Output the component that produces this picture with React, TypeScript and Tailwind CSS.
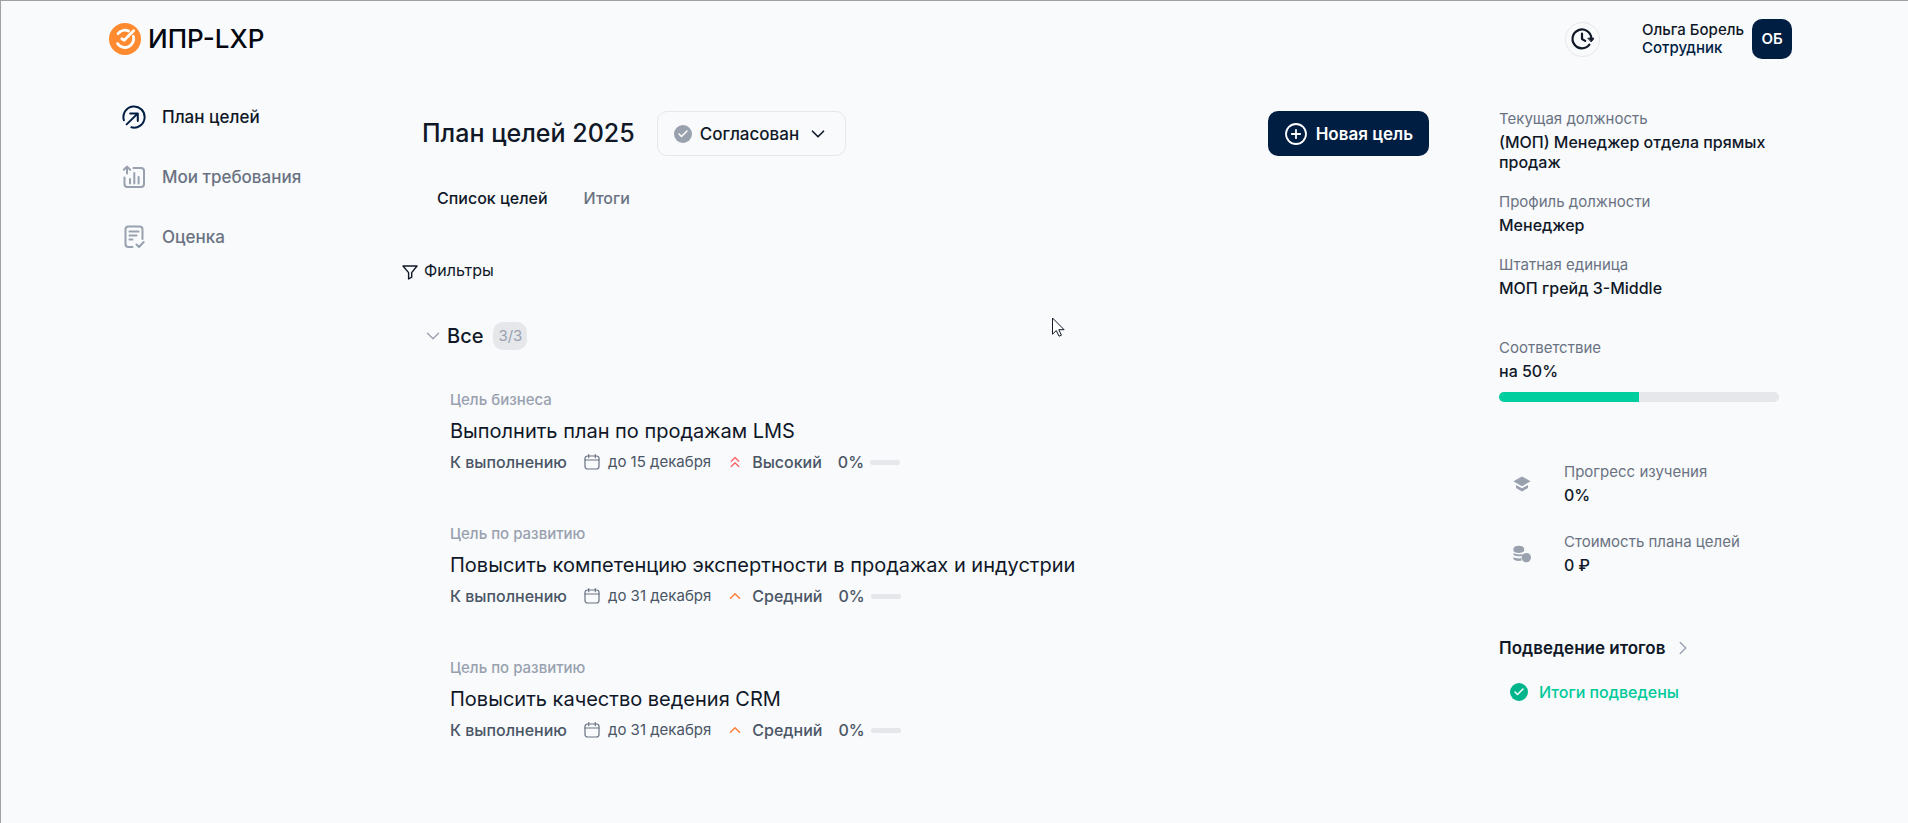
import { useState, type ReactNode } from "react";
import { Check, ChevronDown, ChevronRight, ChevronUp, ChevronsUp } from "lucide-react";
import clsx from "clsx";

type Goal = { id: number; kind: string; title: string; due: string; priority: "high" | "medium"; progress: number };

const GOALS: Goal[] = [
  { id: 1, kind: "Цель бизнеса", title: "Выполнить план по продажам LMS", due: "до 15 декабря", priority: "high", progress: 0 },
  { id: 2, kind: "Цель по развитию", title: "Повысить компетенцию экспертности в продажах и индустрии", due: "до 31 декабря", priority: "medium", progress: 0 },
  { id: 3, kind: "Цель по развитию", title: "Повысить качество ведения CRM", due: "до 31 декабря", priority: "medium", progress: 0 },
];

const stroke = { fill: "none", stroke: "currentColor", strokeLinecap: "round", strokeLinejoin: "round" } as const;

function Logo() {
  return (
    <svg viewBox="0 0 32 32" className="size-8">
      <circle cx="16" cy="16" r="16" fill="#ff8a30" />
      <path d="M9 10.600A9 9 0 0 1 19.600 8M24.400 13.400A8.800 8.800 0 0 1 8.600 20.600" {...stroke} stroke="#fff" strokeWidth="2.800" />
      <path d="M12.800 15.800l2.400 1.400L24.600 7.800" {...stroke} stroke="#fff" strokeWidth="2.800" />
    </svg>
  );
}

function GoalsIcon() {
  return (
    <svg viewBox="0 0 24 24" className="size-6" {...stroke} strokeWidth="2">
      <path d="M1.900 15.200A10.600 10.600 0 1 1 9.400 22.300" />
      <path d="M4.600 19.400L15.600 8.600M8.200 8.400h7.600v7.600" />
    </svg>
  );
}

function RequirementsIcon() {
  return (
    <svg viewBox="0 0 24 24" className="size-6" {...stroke} strokeWidth="2">
      <path d="M11.500 3H19a3 3 0 0 1 3 3v13a3 3 0 0 1-3 3H5.500a3 3 0 0 1-3-3v-6.500" />
      <path d="M5 8.500V2M1.800 4.800L5 1.600l3.200 3.200" />
      <path d="M8 18.500v-4.500M12.300 18.500V8M16.600 18.500v-6.500" />
    </svg>
  );
}

function ReviewIcon() {
  return (
    <svg viewBox="0 0 24 24" className="size-6" {...stroke} strokeWidth="2">
      <path d="M10.500 22H6.500a3 3 0 0 1-3-3V4.500a3 3 0 0 1 3-3h11a3 3 0 0 1 3 3V14" />
      <path d="M7.500 6.500h9M7.500 10.500h7M7.500 14.500h3M14.500 19.500l2.500 2.500 4.700-5" />
    </svg>
  );
}

function HistoryIcon() {
  return (
    <svg viewBox="0 0 24 24" className="size-6" {...stroke} strokeWidth="2.200">
      <path d="M19.400 17.600A9.400 9.400 0 1 1 21.300 11" />
      <path d="M12 6.500V12l3.200 1.900" />
      <path d="M18.200 11.200h6l-2.800 3.400z" fill="currentColor" strokeWidth="1" />
    </svg>
  );
}

function CalendarIcon() {
  return (
    <svg viewBox="0 0 16 16" className="size-4" {...stroke} strokeWidth="1.200">
      <rect x="1" y="2" width="14" height="13" rx="2.500" />
      <path d="M1 6h14M4.700.600v3M11.300.600v3" />
    </svg>
  );
}

function FilterIcon() {
  return (
    <svg viewBox="0 0 16 16" className="mt-1 size-4" {...stroke} strokeWidth="1.400">
      <path d="M1 2h14L9.700 8.600v4.600L6.600 15V8.600z" />
    </svg>
  );
}

function LayersIcon() {
  return (
    <svg viewBox="0 0 18 18" className="size-[18px]" fill="currentColor">
      <path d="M9 1.500l8.600 4.800L9 11.200.400 6.300z" />
      <path d="M3 10l6 3.300L15 10v3L9 16.500 3 13z" />
    </svg>
  );
}

function CoinsIcon() {
  return (
    <svg viewBox="0 0 18 18" className="size-[18px]" fill="currentColor">
      <ellipse cx="5.800" cy="3.800" rx="5.300" ry="3.100" />
      <path d="M.500 4v1.800c0 1.200 2.400 2.200 5.300 2.200s5.300-1 5.300-2.200V4z" />
      <path d="M.500 8c2 1.500 7 2 9.400.800L8.600 11c-3.500.600-8.100-.2-8.100-1.800zM.500 12c1.600 1.300 4.900 1.700 7.600 1.300l.700 2.200c-3.600.9-8.300.2-8.300-1.700z" />
      <circle cx="13.300" cy="12.600" r="4.700" />
    </svg>
  );
}

function CheckBadge({ className }: { className: string }) {
  return (
    <span className={clsx("flex size-[18px] items-center justify-center rounded-full text-white", className)}>
      <Check size={12} strokeWidth={3} />
    </span>
  );
}

const NAV = [
  { label: "План целей", icon: <GoalsIcon />, active: true },
  { label: "Мои требования", icon: <RequirementsIcon />, active: false },
  { label: "Оценка", icon: <ReviewIcon />, active: false },
];

function Header() {
  return (
    <header className="flex h-[76px] items-center justify-between">
      <a href="#" className="flex items-center gap-[7px] text-[26px] leading-9 font-medium text-gray-950">
        <Logo />
        ИПР-LXP
      </a>
      <div className="flex items-center gap-[42px]">
        <button type="button" aria-label="История" className="flex size-[35px] items-center justify-center rounded-full border border-gray-200 text-gray-900">
          <HistoryIcon />
        </button>
        <button type="button" className="flex items-center gap-2 text-left text-[15px] leading-[18px] font-medium">
          <span>
            <span className="block text-gray-900">Ольга Борель</span>
            <span className="block text-[#001d42]">Сотрудник</span>
          </span>
          <span className="flex size-10 items-center justify-center rounded-[10px] bg-[#001d42] font-semibold text-white">ОБ</span>
        </button>
      </div>
    </header>
  );
}

function GoalCard({ goal }: { goal: Goal }) {
  const high = goal.priority === "high";
  return (
    <article className="pl-7">
      <p className="text-[15px] leading-5 font-medium text-gray-400">{goal.kind}</p>
      <h3 className="mt-[7px] text-xl leading-7 text-gray-900">{goal.title}</h3>
      <div className="mt-[5px] flex h-6 items-center text-base font-medium text-gray-600">
        <span>К выполнению</span>
        <span className="ml-[17px] flex items-center gap-2 text-[15px] font-normal">
          <span className="text-gray-500"><CalendarIcon /></span>
          {goal.due}
        </span>
        <span className="ml-[15px] flex items-center gap-2">
          {high
            ? <ChevronsUp size={18} strokeWidth={1.800} className="text-red-400" />
            : <ChevronUp size={18} strokeWidth={2} className="text-[#fb7f3b]" />}
          {high ? "Высокий" : "Средний"}
        </span>
        <span className="ml-4">{goal.progress}%</span>
        <span className="ml-1.5 h-[5px] w-[30px] overflow-hidden rounded-full bg-gray-200">
          <span className="block h-full bg-[#00ce9f]" style={{ width: `${goal.progress}%` }} />
        </span>
      </div>
    </article>
  );
}

function Field({ label, children }: { label: string; children: ReactNode }) {
  return (
    <div>
      <dt className="text-[15px] leading-5 text-gray-500">{label}</dt>
      <dd className="mt-[3px] text-base leading-5 font-medium text-gray-900">{children}</dd>
    </div>
  );
}

function Summary() {
  return (
    <aside className="w-[280px] shrink-0 pt-3">
      <dl className="space-y-5">
        <Field label="Текущая должность">(МОП) Менеджер отдела прямых продаж</Field>
        <Field label="Профиль должности">Менеджер</Field>
        <Field label="Штатная единица">МОП грейд 3-Middle</Field>
      </dl>
      <dl className="mt-10">
        <Field label="Соответствие">на 50%</Field>
      </dl>
      <div role="progressbar" aria-label="Соответствие" aria-valuenow={50} className="mt-[11px] h-2.5 overflow-hidden rounded-full bg-gray-200">
        <div className="h-full w-1/2 bg-[#00ce9f]" />
      </div>
      <dl className="mt-[60px] space-y-[27px] pl-3.5">
        <div className="flex items-center gap-[33px] text-gray-400">
          <LayersIcon />
          <Field label="Прогресс изучения">0%</Field>
        </div>
        <div className="flex items-center gap-[33px] text-gray-400">
          <CoinsIcon />
          <Field label="Стоимость плана целей">0 ₽</Field>
        </div>
      </dl>
      <a href="#" className="mt-[61px] flex items-center gap-[7px] text-[17px] leading-6 font-semibold text-gray-900">
        Подведение итогов
        <ChevronRight size={22} strokeWidth={1.500} className="text-gray-400" />
      </a>
      <p className="mt-5 flex items-center gap-[11px] pl-[11px] leading-6 font-medium text-[#00c99a]">
        <CheckBadge className="bg-[#00b58b]" />
        Итоги подведены
      </p>
    </aside>
  );
}

export default function App() {
  const [tab, setTab] = useState("Список целей");
  const [open, setOpen] = useState(true);

  return (
    <div className="relative min-h-screen border-t border-l border-[#a0a1a4] bg-[#f8fafc] pr-[116px] pl-[108px] font-['Inter',sans-serif]">
      <Header />
      <div className="flex pt-5">
        <nav className="w-[313px] shrink-0 space-y-5 pl-[13px]">
          {NAV.map((item) => (
            <a key={item.label} href="#" className={clsx("flex h-10 items-center gap-4 text-[17px] leading-7 font-medium", item.active ? "text-[#001d42]" : "text-gray-400")}>
              {item.icon}
              <span className={item.active ? "text-gray-900" : "text-gray-500"}>{item.label}</span>
            </a>
          ))}
        </nav>

        <main className="min-w-0 flex-1 pt-3.5">
          <div className="flex items-center">
            <h1 className="text-[25px] leading-[39px] font-medium text-gray-900">План целей 2025</h1>
            <button type="button" className="ml-[22px] flex h-[45px] items-center gap-2 rounded-[10px] border border-gray-200 px-4 text-[17px] leading-7 font-medium text-gray-900">
              <CheckBadge className="bg-gray-400" />
              Согласован
              <ChevronDown size={22} strokeWidth={1.800} />
            </button>
            <button type="button" className="ml-auto flex h-[45px] items-center gap-2 rounded-[10px] bg-[#001d42] px-4 text-[17px] leading-7 font-semibold text-white">
              <svg viewBox="0 0 24 24" className="size-6" {...stroke} strokeWidth="1.800">
                <circle cx="12" cy="12" r="10" />
                <path d="M12 7.800v8.400M7.800 12h8.400" />
              </svg>
              Новая цель
            </button>
          </div>

          <div role="tablist" className="mt-[30px] flex gap-9 pl-[15px]">
            {["Список целей", "Итоги"].map((name) => (
              <button
                key={name}
                type="button"
                role="tab"
                aria-selected={tab === name}
                onClick={() => setTab(name)}
                className={clsx("text-base leading-6 font-medium", tab === name ? "text-gray-900" : "text-gray-500")}
              >
                {name}
              </button>
            ))}
          </div>

          <button type="button" className="mt-12 -ml-5 flex items-center gap-1.5 text-base leading-6 text-gray-900">
            <FilterIcon />
            Фильтры
          </button>

          <section className="mt-10">
            <button type="button" onClick={() => setOpen(!open)} className="flex h-7 items-center text-xl text-gray-900">
              <ChevronDown size={22} strokeWidth={1.500} className="text-gray-400" />
              <span className="ml-[3px] font-medium">Все</span>
              <span className="ml-2.5 rounded-[10px] bg-gray-200 px-[5px] text-[15px] leading-7 text-gray-400">3/3</span>
            </button>
            {open && (
              <div className="mt-10 space-y-[50px]">
                {GOALS.map((goal) => <GoalCard key={goal.id} goal={goal} />)}
              </div>
            )}
          </section>
        </main>

        <div className="w-[70px] shrink-0" />
        <Summary />
        <div className="w-[13px] shrink-0" />
      </div>

      <svg viewBox="0 0 13 20" className="pointer-events-none absolute top-[316px] left-[1051px] h-5 w-[13px]">
        <path d="M.500 1v16.200l3.800-3.700 2.700 5.700 2.400-1-2.600-5.500h5.300z" fill="#fff" stroke="#111827" />
      </svg>
    </div>
  );
}
